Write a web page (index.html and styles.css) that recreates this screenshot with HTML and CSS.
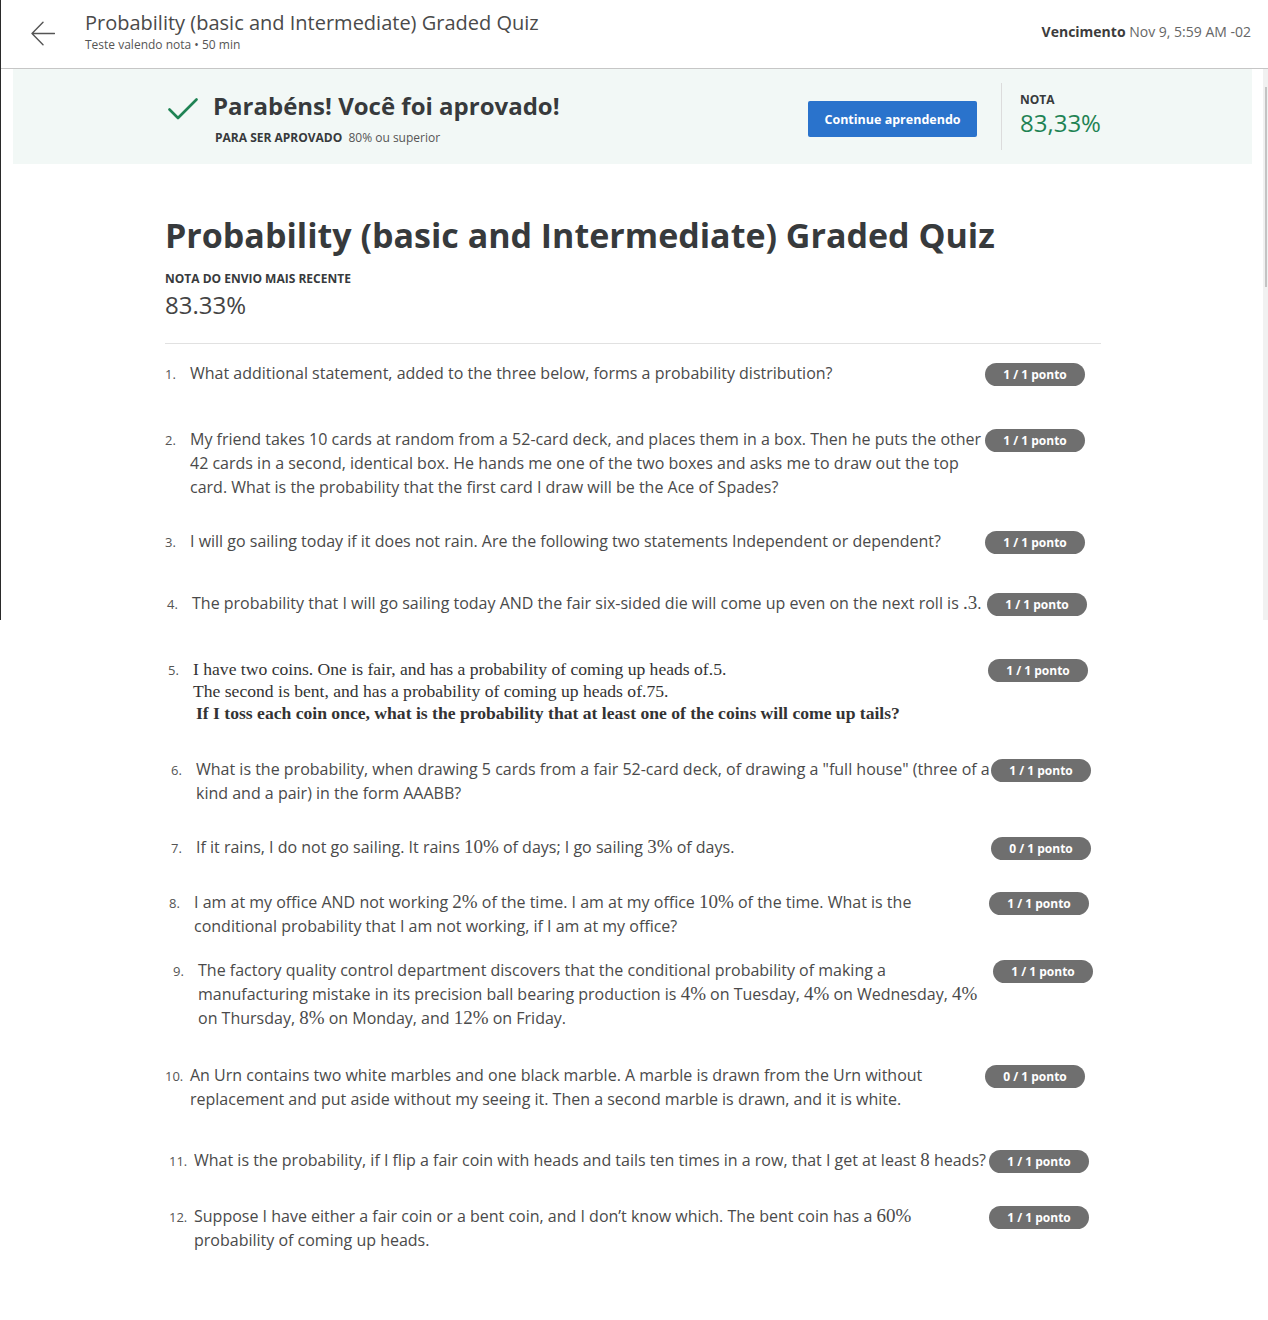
FILE: index.html
```html
<!DOCTYPE html>
<html lang="pt-BR">
<head>
<meta charset="utf-8">
<title>Probability (basic and Intermediate) Graded Quiz</title>
<link rel="stylesheet" href="styles.css">
</head>
<body>
<div class="edge-line"></div>
<div class="scroll-track"><div class="scroll-thumb"></div></div>

<header class="header">
  <svg class="back" viewBox="0 0 24 26" width="24" height="26" aria-hidden="true">
    <path d="M23.5 12.5H1 M12 1.2 L1 12.5 L12 23.8" fill="none" stroke="#555" stroke-width="1.4" stroke-linecap="round" stroke-linejoin="round"/>
  </svg>
  <div class="header-titles">
    <div class="header-title">Probability (basic and Intermediate) Graded Quiz</div>
    <div class="header-sub">Teste valendo nota • 50 min</div>
  </div>
  <div class="due"><strong>Vencimento</strong> Nov 9, 5:59 AM -02</div>
</header>

<section class="banner">
  <div class="banner-inner">
    <div class="pass">
      <svg class="check" viewBox="0 0 30 24" width="30" height="24" aria-hidden="true">
        <path d="M1.5 12.5 L10 21 L28.5 2.5" fill="none" stroke="#1f8354" stroke-width="2.6" stroke-linecap="round" stroke-linejoin="round"/>
      </svg>
      <div class="pass-text">
        <div class="pass-title">Parabéns! Você foi aprovado!</div>
        <div class="pass-sub"><strong>PARA SER APROVADO</strong> 80% ou superior</div>
      </div>
    </div>
    <button class="continue">Continue aprendendo</button>
    <div class="divider"></div>
    <div class="grade">
      <div class="grade-label">NOTA</div>
      <div class="grade-value">83,33%</div>
    </div>
  </div>
</section>

<main class="main">
  <h1 class="quiz-title">Probability (basic and Intermediate) Graded Quiz</h1>
  <div class="recent-label">NOTA DO ENVIO MAIS RECENTE</div>
  <div class="recent-value">83.33%</div>
  <hr class="rule">

  <ol class="questions">
    <li class="q">
      <span class="q-num">1.</span>
      <div class="q-text">What additional statement, added to the three below, forms a probability distribution?</div>
      <span class="badge">1 / 1 ponto</span>
    </li>
    <li class="q mt-41">
      <span class="q-num">2.</span>
      <div class="q-text">My friend takes 10 cards at random from a 52-card deck, and places them in a box. Then he puts the other<br>42 cards in a second, identical box. He hands me one of the two boxes and asks me to draw out the top<br>card. What is the probability that the first card I draw will be the Ace of Spades?</div>
      <span class="badge">1 / 1 ponto</span>
    </li>
    <li class="q mt-30">
      <span class="q-num">3.</span>
      <div class="q-text">I will go sailing today if it does not rain. Are the following two statements Independent or dependent?</div>
      <span class="badge">1 / 1 ponto</span>
    </li>
    <li class="q mt-37 shift-2">
      <span class="q-num">4.</span>
      <div class="q-text">The probability that I will go sailing today AND the fair six-sided die will come up even on the next roll is <span class="m">.3</span>.</div>
      <span class="badge">1 / 1 ponto</span>
    </li>
    <li class="q q--serif mt-42 shift-3">
      <span class="q-num">5.</span>
      <div class="q-text">I have two coins. One is fair, and has a probability of coming up heads of.5.<br>The second is bent, and has a probability of coming up heads of.75.<br><strong class="indent">If I toss each coin once, what is the probability that at least one of the coins will come up tails?</strong></div>
      <span class="badge">1 / 1 ponto</span>
    </li>
    <li class="q mt-33 shift-6">
      <span class="q-num">6.</span>
      <div class="q-text">What is the probability, when drawing 5 cards from a fair 52-card deck, of drawing a "full house" (three of a<br>kind and a pair) in the form AAABB?</div>
      <span class="badge">1 / 1 ponto</span>
    </li>
    <li class="q mt-30 shift-6">
      <span class="q-num">7.</span>
      <div class="q-text">If it rains, I do not go sailing. It rains <span class="m">10%</span> of days; I go sailing <span class="m">3%</span> of days.</div>
      <span class="badge">0 / 1 ponto</span>
    </li>
    <li class="q mt-30 shift-4">
      <span class="q-num">8.</span>
      <div class="q-text">I am at my office AND not working <span class="m">2%</span> of the time. I am at my office <span class="m">10%</span> of the time. What is the<br>conditional probability that I am not working, if I am at my office?</div>
      <span class="badge">1 / 1 ponto</span>
    </li>
    <li class="q mt-20 shift-8">
      <span class="q-num">9.</span>
      <div class="q-text">The factory quality control department discovers that the conditional probability of making a<br>manufacturing mistake in its precision ball bearing production is <span class="m">4%</span> on Tuesday, <span class="m">4%</span> on Wednesday, <span class="m">4%</span><br>on Thursday, <span class="m">8%</span> on Monday, and <span class="m">12%</span> on Friday.</div>
      <span class="badge">1 / 1 ponto</span>
    </li>
    <li class="q mt-33">
      <span class="q-num">10.</span>
      <div class="q-text">An Urn contains two white marbles and one black marble. A marble is drawn from the Urn without<br>replacement and put aside without my seeing it. Then a second marble is drawn, and it is white.</div>
      <span class="badge">0 / 1 ponto</span>
    </li>
    <li class="q mt-37 shift-4">
      <span class="q-num">11.</span>
      <div class="q-text">What is the probability, if I flip a fair coin with heads and tails ten times in a row, that I get at least <span class="m">8</span> heads?</div>
      <span class="badge">1 / 1 ponto</span>
    </li>
    <li class="q mt-31 shift-4">
      <span class="q-num">12.</span>
      <div class="q-text">Suppose I have either a fair coin or a bent coin, and I don’t know which. The bent coin has a <span class="m">60%</span><br>probability of coming up heads.</div>
      <span class="badge">1 / 1 ponto</span>
    </li>
  </ol>
</main>
</body>
</html>
```

FILE: styles.css
```css
html, body {
  margin: 0;
  padding: 0;
}

body {
  position: relative;
  font-family: "Open Sans", "Noto Sans", sans-serif;
  color: #4a4a4a;
  background: #fff;
  min-height: 1320px;
}

.edge-line {
  position: absolute;
  left: 0;
  top: 0;
  width: 1px;
  height: 620px;
  background: #2a2a2a;
}

.scroll-track {
  position: absolute;
  right: 0;
  top: 69px;
  width: 5px;
  height: 551px;
  background: #f1f1f1;
}

.scroll-thumb {
  margin-top: 18px;
  margin-left: 2px;
  width: 2px;
  height: 200px;
  background: #c4c4c4;
}

/* Header */
.header {
  display: flex;
  align-items: flex-start;
  height: 68px;
  padding: 0 17px 0 31px;
  border-bottom: 1px solid #c6c6c6;
}

.back {
  flex: none;
  margin-top: 21px;
}

.header-titles {
  margin-left: 30px;
  padding-top: 9px;
}

.header-title {
  font-size: 20px;
  line-height: 28px;
  color: #4a4a4a;
}

.header-sub {
  font-size: 12px;
  line-height: 16px;
  color: #555;
}

.due {
  margin-left: auto;
  margin-top: 22px;
  font-size: 14px;
  line-height: 20px;
  color: #666;
}

.due strong {
  color: #3c3c3c;
  font-weight: 700;
}

/* Banner */
.banner {
  margin: 0 16px 0 13px;
  height: 95px;
  background: #f2f8f6;
}

.banner-inner {
  margin-left: 152px;
  width: 936px;
  padding-top: 14px;
  display: flex;
  align-items: flex-start;
}

.pass {
  display: flex;
  align-items: flex-start;
  margin-top: 7px;
  margin-left: 3px;
}

.check {
  flex: none;
  margin-top: 7px;
}

.pass-text {
  margin-left: 15px;
}

.pass-title {
  font-size: 24px;
  line-height: 32px;
  font-weight: 700;
  color: #373a3c;
}

.pass-sub {
  margin-top: 8px;
  font-size: 12px;
  line-height: 16px;
  color: #555;
  margin-left: 2px;
}

.pass-sub strong {
  color: #373a3c;
  margin-right: 3px;
}

.continue {
  margin-left: auto;
  margin-top: 18px;
  width: 169px;
  height: 36px;
  border: none;
  border-radius: 2px;
  background: #2a73cc;
  color: #fff;
  font-family: "Open Sans", "Noto Sans", sans-serif;
  font-size: 12.5px;
  font-weight: 700;
  padding: 0;
}

.divider {
  margin-left: 24px;
  width: 1px;
  height: 67px;
  background: #dcdcdc;
}

.grade {
  margin-left: 18px;
  width: 81px;
  margin-top: 10px;
}

.grade-label {
  font-size: 12px;
  line-height: 14px;
  font-weight: 700;
  color: #373a3c;
}

.grade-value {
  font-size: 24px;
  line-height: 32px;
  color: #1f8354;
  white-space: nowrap;
}

/* Main */
.main {
  margin-left: 165px;
  width: 936px;
}

.quiz-title {
  margin: 47px 0 0;
  font-size: 34px;
  line-height: 48px;
  font-weight: 700;
  color: #373a3c;
  white-space: nowrap;
}

.recent-label {
  margin-top: 12px;
  font-size: 12px;
  line-height: 16px;
  font-weight: 700;
  color: #373a3c;
}

.recent-value {
  margin-top: 2px;
  font-size: 24px;
  line-height: 32px;
  color: #444;
}

.rule {
  margin: 22px 0 0;
  border: none;
  height: 1px;
  background: #e1e1e1;
}

.questions {
  list-style: none;
  margin: 17px 0 0;
  padding: 0;
}

.q {
  display: flex;
  align-items: baseline;
}

.q-num {
  flex: none;
  width: 25px;
  font-size: 13px;
  line-height: 24px;
  color: #555;
}

.q-text {
  flex: none;
  width: 795px;
  font-size: 16px;
  line-height: 24px;
  color: #4a4a4a;
  white-space: nowrap;
}

.m {
  font-family: "Liberation Serif", "DejaVu Serif", serif;
  font-size: 19px;
}

.q--serif .q-text {
  font-family: "Liberation Serif", "DejaVu Serif", serif;
  font-size: 17.6px;
  line-height: 22px;
  color: #333;
}

.q--serif .q-num {
  line-height: 22px;
}

.indent {
  display: inline-block;
  padding-left: 3px;
}

.badge {
  flex: none;
  width: 100px;
  height: 23px;
  border-radius: 12px;
  background: #6f6f6f;
  color: #fff;
  font-size: 12px;
  line-height: 23px;
  font-weight: 700;
  text-align: center;
}

.mt-20 { margin-top: 20px; }
.mt-30 { margin-top: 30px; }
.mt-31 { margin-top: 31px; }
.mt-33 { margin-top: 33px; }
.mt-37 { margin-top: 37px; }
.mt-41 { margin-top: 41px; }
.mt-42 { margin-top: 42px; }

.shift-2 { padding-left: 2px; }
.shift-3 { padding-left: 3px; }
.shift-4 { padding-left: 4px; }
.shift-6 { padding-left: 6px; }
.shift-8 { padding-left: 8px; }
```
